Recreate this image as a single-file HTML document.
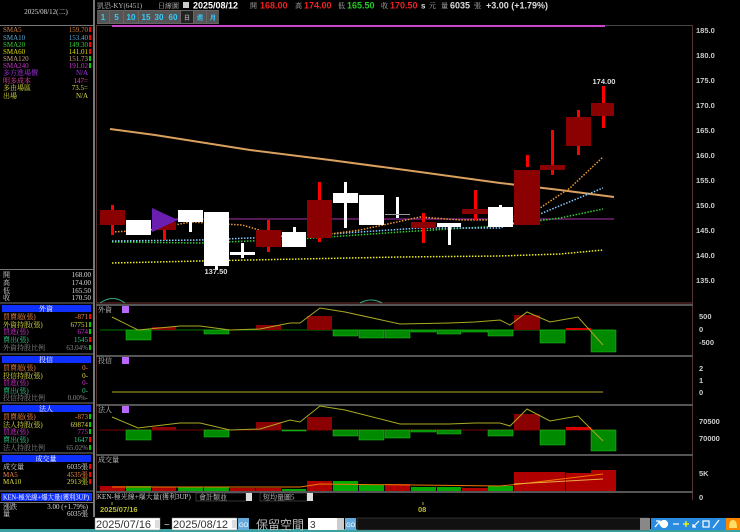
<!DOCTYPE html>
<html><head><meta charset="utf-8"><style>
html,body{margin:0;padding:0;background:#000;width:740px;height:532px;overflow:hidden}
svg{display:block}
text{font-family:"Liberation Sans","Noto Sans CJK TC",sans-serif}
.s{font-family:"Liberation Serif","Noto Serif CJK SC",serif;font-size:7px}
</style></head><body>
<svg width="740" height="532" viewBox="0 0 740 532">
<defs><clipPath id="lc"><rect x="0" y="0" width="93" height="532"/></clipPath></defs>
<rect width="740" height="532" fill="#000"/>
<line x1="94" y1="0" x2="94" y2="517" stroke="#777" stroke-width="2"/>
<g clip-path="url(#lc)">
<line x1="0" y1="25.5" x2="93" y2="25.5" stroke="#777"/>
<text x="46" y="14" class="s" fill="#ddd" text-anchor="middle" font-size="8">2025/08/12(二)</text>
<text x="3" y="32" fill="#d08040" class="s">SMA5</text><text x="88" y="32" fill="#d08040" class="s" text-anchor="end">159.70</text>
<text x="3" y="40" fill="#5aa8d8" class="s">SMA10</text><text x="88" y="40" fill="#5aa8d8" class="s" text-anchor="end">153.40</text>
<text x="3" y="47" fill="#3c3" class="s">SMA20</text><text x="88" y="47" fill="#3c3" class="s" text-anchor="end">149.30</text>
<text x="3" y="54" fill="#dd0" class="s">SMA60</text><text x="88" y="54" fill="#dd0" class="s" text-anchor="end">141.01</text>
<text x="3" y="61" fill="#c9a080" class="s">SMA120</text><text x="88" y="61" fill="#c9a080" class="s" text-anchor="end">151.73</text>
<text x="3" y="68" fill="#c3c" class="s">SMA240</text><text x="88" y="68" fill="#c3c" class="s" text-anchor="end">191.02</text>
<text x="3" y="75" fill="#a3e" class="s">多方進場價</text><text x="88" y="75" fill="#a3e" class="s" text-anchor="end">N/A</text>
<text x="3" y="83" fill="#e4a" class="s">明多成本</text><text x="88" y="83" fill="#e4a" class="s" text-anchor="end">147=</text>
<text x="3" y="90" fill="#dd4" class="s">多由場區</text><text x="88" y="90" fill="#dd4" class="s" text-anchor="end">73.5=</text>
<text x="3" y="98" fill="#dd4" class="s">出場</text><text x="88" y="98" fill="#dd4" class="s" text-anchor="end">N/A</text>
<g fill="#f00"><rect x="89" y="27" width="2" height="5"/><rect x="89" y="35" width="2" height="5"/><rect x="89" y="42" width="2" height="5"/><rect x="89" y="49" width="2" height="5"/></g>
<g fill="#0c0"><rect x="89" y="56" width="2" height="5"/><rect x="89" y="63" width="2" height="5"/></g>
<line x1="0" y1="269.5" x2="93" y2="269.5" stroke="#777"/>
<text x="3" y="277" class="s" fill="#ddd">開</text><text x="91" y="277" class="s" fill="#ddd" text-anchor="end">168.00</text>
<text x="3" y="285" class="s" fill="#ddd">高</text><text x="91" y="285" class="s" fill="#ddd" text-anchor="end">174.00</text>
<text x="3" y="293" class="s" fill="#ddd">低</text><text x="91" y="293" class="s" fill="#ddd" text-anchor="end">165.50</text>
<text x="3" y="300" class="s" fill="#ddd">收</text><text x="91" y="300" class="s" fill="#ddd" text-anchor="end">170.50</text>
<line x1="0" y1="303" x2="93" y2="303" stroke="#777"/>
<rect x="2" y="305" width="89" height="7" fill="#1030ff"/><text x="46" y="311" class="s" fill="#fff" text-anchor="middle">外資</text>
<text x="3" y="319" class="s" fill="#e84">買賣超(張)</text><text x="88" y="319" class="s" fill="#e84" text-anchor="end">-871</text>
<text x="3" y="327" class="s" fill="#dd4">外資持股(張)</text><text x="88" y="327" class="s" fill="#dd4" text-anchor="end">67751</text>
<text x="3" y="334" class="s" fill="#c3c">買進(張)</text><text x="88" y="334" class="s" fill="#c3c" text-anchor="end">674</text>
<text x="3" y="342" class="s" fill="#3c8">賣出(張)</text><text x="88" y="342" class="s" fill="#3c8" text-anchor="end">1545</text>
<text x="3" y="350" class="s" fill="#888">外資持股比例</text><text x="88" y="350" class="s" fill="#888" text-anchor="end">63.04%</text>
<line x1="0" y1="354" x2="93" y2="354" stroke="#777"/>
<rect x="2" y="356" width="89" height="7" fill="#1030ff"/><text x="46" y="362" class="s" fill="#fff" text-anchor="middle">投信</text>
<text x="3" y="370" class="s" fill="#e84">買賣超(張)</text><text x="88" y="370" class="s" fill="#e84" text-anchor="end">0-</text>
<text x="3" y="378" class="s" fill="#dd4">投信持股(張)</text><text x="88" y="378" class="s" fill="#dd4" text-anchor="end">0-</text>
<text x="3" y="385" class="s" fill="#c3c">買進(張)</text><text x="88" y="385" class="s" fill="#c3c" text-anchor="end">0-</text>
<text x="3" y="393" class="s" fill="#3c8">賣出(張)</text><text x="88" y="393" class="s" fill="#3c8" text-anchor="end">0-</text>
<text x="3" y="400" class="s" fill="#888">投信持股比例</text><text x="88" y="400" class="s" fill="#888" text-anchor="end">0.00%-</text>
<line x1="0" y1="403" x2="93" y2="403" stroke="#777"/>
<rect x="2" y="405" width="89" height="7" fill="#1030ff"/><text x="46" y="411" class="s" fill="#fff" text-anchor="middle">法人</text>
<text x="3" y="419" class="s" fill="#e84">買賣超(張)</text><text x="88" y="419" class="s" fill="#e84" text-anchor="end">-873</text>
<text x="3" y="427" class="s" fill="#dd4">法人持股(張)</text><text x="88" y="427" class="s" fill="#dd4" text-anchor="end">69874</text>
<text x="3" y="434" class="s" fill="#c3c">買進(張)</text><text x="88" y="434" class="s" fill="#c3c" text-anchor="end">775</text>
<text x="3" y="442" class="s" fill="#3c8">賣出(張)</text><text x="88" y="442" class="s" fill="#3c8" text-anchor="end">1647</text>
<text x="3" y="450" class="s" fill="#888">法人持股比例</text><text x="88" y="450" class="s" fill="#888" text-anchor="end">65.02%</text>
<line x1="0" y1="453" x2="93" y2="453" stroke="#777"/>
<rect x="2" y="455" width="89" height="7" fill="#1030ff"/><text x="46" y="461" class="s" fill="#fff" text-anchor="middle">成交量</text>
<text x="3" y="469" class="s" fill="#ddd">成交量</text><text x="88" y="469" class="s" fill="#ddd" text-anchor="end">6035張</text>
<text x="3" y="477" class="s" fill="#e84">MA5</text><text x="88" y="477" class="s" fill="#e84" text-anchor="end">4535張</text>
<text x="3" y="484" class="s" fill="#dd4">MA10</text><text x="88" y="484" class="s" fill="#dd4" text-anchor="end">2913張</text>
<line x1="0" y1="491" x2="93" y2="491" stroke="#777"/>
<rect x="1" y="493" width="91" height="8" fill="#1030ff"/><text x="3" y="499.5" class="s" fill="#fff" font-size="6" textLength="86" lengthAdjust="spacingAndGlyphs">KEN-極光線+爆大量(獲利3UP)</text>
<text x="3" y="509" class="s" fill="#ddd">漲跌</text><text x="88" y="509" class="s" fill="#ddd" text-anchor="end">3.00 (+1.79%)</text>
<text x="3" y="516" class="s" fill="#ddd">量</text><text x="88" y="516" class="s" fill="#ddd" text-anchor="end">6035張</text>
<g fill="#f00"><rect x="89" y="314" width="2" height="5"/><rect x="89" y="337" width="2" height="5"/><rect x="89" y="437" width="2" height="5"/><rect x="89" y="464" width="2" height="5"/><rect x="89" y="472" width="2" height="5"/><rect x="89" y="479" width="2" height="5"/></g>
<g fill="#0c0"><rect x="89" y="322" width="2" height="5"/><rect x="89" y="329" width="2" height="5"/><rect x="89" y="345" width="2" height="5"/><rect x="89" y="414" width="2" height="5"/><rect x="89" y="422" width="2" height="5"/><rect x="89" y="429" width="2" height="5"/><rect x="89" y="445" width="2" height="5"/></g>
<line x1="0" y1="502.5" x2="93" y2="502.5" stroke="#777"/>
</g>

<text x="97" y="8" class="s" fill="#bbb">凱恐-KY(6451)</text>
<text x="158" y="8" class="s" fill="#bbb">日線圖</text>
<rect x="183" y="2" width="6" height="6" fill="#ccc"/>
<text x="193" y="8.5" font-size="9" font-weight="bold" fill="#fff">2025/08/12</text>
<text x="250" y="8" class="s" fill="#bbb">開</text><text x="260" y="8.5" font-size="9" font-weight="bold" fill="#e22">168.00</text>
<text x="295" y="8" class="s" fill="#bbb">高</text><text x="304" y="8.5" font-size="9" font-weight="bold" fill="#e22">174.00</text>
<text x="338" y="8" class="s" fill="#bbb">低</text><text x="347" y="8.5" font-size="9" font-weight="bold" fill="#2c2">165.50</text>
<text x="381" y="8" class="s" fill="#bbb">收</text><text x="390" y="8.5" font-size="9" font-weight="bold" fill="#e22">170.50</text>
<text x="421" y="8.5" font-size="8" font-weight="bold" fill="#ddd">s</text><text x="429" y="8" class="s" fill="#bbb">元</text>
<text x="441" y="8" class="s" fill="#bbb">量</text><text x="450" y="8.5" font-size="9" font-weight="bold" fill="#ddd">6035</text>
<text x="474" y="8" class="s" fill="#bbb">張</text>
<text x="486" y="8.5" font-size="9" font-weight="bold" fill="#ddd">+3.00 (+1.79%)</text>
<rect x="97" y="10" width="122" height="14" fill="#666"/>
<g font-size="8" font-weight="bold" fill="#3cf" text-anchor="middle">
<rect x="97" y="11" width="12" height="12" fill="#555"/><text x="103" y="20">1</text>
<rect x="110" y="11" width="13" height="12" fill="#555"/><text x="116.5" y="20">5</text>
<rect x="124" y="11" width="14" height="12" fill="#555"/><text x="131" y="20">10</text>
<rect x="139" y="11" width="14" height="12" fill="#555"/><text x="146" y="20">15</text>
<rect x="152" y="11" width="14" height="12" fill="#555"/><text x="159" y="20">30</text>
<rect x="166" y="11" width="14" height="12" fill="#555"/><text x="173" y="20">60</text>
<rect x="181" y="11" width="12" height="12" fill="#222"/><text x="187" y="20" font-size="6" fill="#999">日</text>
<rect x="194" y="11" width="12" height="12" fill="#555"/><text x="200" y="20" font-size="6">週</text>
<rect x="207" y="11" width="12" height="12" fill="#555"/><text x="213" y="20" font-size="6">月</text>
</g>
<line x1="96" y1="25.5" x2="692" y2="25.5" stroke="#444"/>
<line x1="692.5" y1="25" x2="692.5" y2="500" stroke="#533"/>
<line x1="96.5" y1="25" x2="96.5" y2="500" stroke="#533"/>
<line x1="112" y1="26" x2="605" y2="26" stroke="#c4c" stroke-width="2"/>
<g font-size="7.5" font-weight="bold" fill="#ccc">
<text x="696" y="33">185.0</text><text x="696" y="58">180.0</text><text x="696" y="83">175.0</text><text x="696" y="108">170.0</text><text x="696" y="133">165.0</text><text x="696" y="158">160.0</text><text x="696" y="183">155.0</text><text x="696" y="208">150.0</text><text x="696" y="233">145.0</text><text x="696" y="258">140.0</text><text x="696" y="283">135.0</text>
</g>
<polyline points="110,129 155,135 250,150 330,160 420,172 500,183 560,190 614,197" fill="none" stroke="#d9a060" stroke-width="2"/>
<line x1="170" y1="219" x2="614" y2="219" stroke="#a3a" stroke-width="1"/>
<g fill="none" stroke-width="1.5" stroke-dasharray="1.5,1.5">
<polyline points="112,263 200,261 300,259 400,257 500,256 560,254 603,250" stroke="#ee2"/>
<polyline points="112,242 200,243 300,239 400,232 500,226 560,218 603,209" stroke="#3c3"/>
<polyline points="112,241 200,240 300,236 360,232 420,228 500,228 540,214 603,188" stroke="#8cf"/>
<polyline points="112,232 150,230 190,222 242,225 280,236 300,238 360,230 420,217 460,220 500,220 540,208 570,188 603,157" stroke="#e93"/>
</g>
<g fill="#8b0000">
<rect x="111" y="205" width="3" height="30" fill="#f00"/><rect x="100" y="210" width="25" height="15"/>
<rect x="163" y="222" width="3" height="18" fill="#f00"/><rect x="152" y="222" width="24" height="8"/>
<rect x="267" y="220" width="3" height="32" fill="#f00"/><rect x="256" y="230" width="25" height="17"/>
<rect x="318" y="182" width="3" height="60" fill="#f00"/><rect x="307" y="200" width="25" height="38"/>
<rect x="422" y="213" width="3" height="30" fill="#f00"/><rect x="411" y="222" width="25" height="6"/>
<rect x="474" y="190" width="3" height="30" fill="#f00"/><rect x="462" y="209" width="26" height="5"/>
<rect x="526" y="155" width="3" height="12" fill="#f00"/><rect x="514" y="170" width="26" height="55"/>
<rect x="551" y="130" width="3" height="45" fill="#f00"/><rect x="540" y="165" width="25" height="5"/>
<rect x="577" y="110" width="3" height="45" fill="#f00"/><rect x="566" y="117" width="25" height="29"/>
<rect x="602" y="86" width="3" height="42" fill="#f00"/><rect x="591" y="103" width="23" height="13"/>
</g>
<polygon points="152,208 178,220 152,232" fill="#6a1fb0"/>
<g fill="#fff">
<rect x="126" y="220" width="25" height="15"/>
<rect x="189" y="215" width="3" height="17"/><rect x="178" y="210" width="25" height="12"/>
<rect x="215" y="212" width="3" height="58"/><rect x="204" y="212" width="25" height="54"/>
<rect x="241" y="243" width="3" height="15"/><rect x="230" y="252" width="25" height="3"/>
<rect x="293" y="227" width="3" height="10"/><rect x="282" y="232" width="24" height="15"/>
<rect x="344" y="182" width="3" height="46"/><rect x="333" y="193" width="25" height="10"/>
<rect x="359" y="195" width="25" height="30"/>
<rect x="396" y="197" width="3" height="21"/><rect x="385" y="214" width="25" height="1" fill="#999"/>
<rect x="448" y="223" width="3" height="22"/><rect x="437" y="223" width="24" height="4"/>
<rect x="499" y="205" width="3" height="4"/><rect x="488" y="207" width="25" height="20"/>
</g>
<text x="216" y="274" font-size="7.5" font-weight="bold" fill="#ddd" text-anchor="middle">137.50</text>
<text x="604" y="84" font-size="7.5" font-weight="bold" fill="#ddd" text-anchor="middle">174.00</text>
<line x1="97" y1="303" x2="692" y2="303" stroke="#733"/>
<path d="M100,303 Q113,294 125,303 M360,303 Q371,297 382,303" stroke="#3a8" fill="none"/>
<g fill="#555"><rect x="96" y="304" width="597" height="2"/><rect x="96" y="355" width="597" height="2"/><rect x="96" y="404" width="597" height="2"/><rect x="96" y="454" width="597" height="2"/><rect x="96" y="491" width="597" height="2"/></g>
<text x="98" y="312" class="s" fill="#ccc">外資</text><rect x="122" y="306" width="7" height="7" fill="#b6f"/>
<line x1="100" y1="330" x2="614" y2="330" stroke="#070"/>
<g fill="#008a00" stroke="#2c2" stroke-width=".5">
<rect x="126" y="330" width="25" height="10"/><rect x="204" y="330" width="25" height="4"/><rect x="333" y="330" width="25" height="6"/><rect x="359" y="330" width="25" height="8"/><rect x="385" y="330" width="25" height="8"/><rect x="411" y="330" width="25" height="2"/><rect x="437" y="330" width="24" height="4"/><rect x="462" y="330" width="26" height="2"/><rect x="488" y="330" width="25" height="6"/><rect x="540" y="330" width="25" height="13"/><rect x="591" y="330" width="25" height="22"/>
</g>
<g fill="#8b0000"><rect x="152" y="327" width="24" height="3"/><rect x="256" y="325" width="25" height="5"/><rect x="307" y="316" width="25" height="14"/><rect x="514" y="315" width="26" height="15"/><rect x="566" y="328" width="25" height="2" fill="#d00"/></g>
<polyline points="112,317 138,330 180,326 200,326 230,330 260,329 290,323 300,323 320,308 345,312 400,324 449,323 475,322 500,320 510,325 527,312 550,322 578,317 603,345" fill="none" stroke="#aa2"/>
<g font-size="7.5" font-weight="bold" fill="#ccc"><text x="699" y="319">500</text><text x="699" y="332">0</text><text x="699" y="345">-500</text></g>
<text x="98" y="363" class="s" fill="#ccc">投信</text><rect x="122" y="357" width="7" height="7" fill="#b6f"/>
<line x1="112" y1="392" x2="603" y2="392" stroke="#aa2"/>
<g font-size="7.5" font-weight="bold" fill="#ccc"><text x="699" y="371">2</text><text x="699" y="383">1</text><text x="699" y="395">0</text></g>
<text x="98" y="412" class="s" fill="#ccc">法人</text><rect x="122" y="406" width="7" height="7" fill="#b6f"/>
<line x1="100" y1="430" x2="614" y2="430" stroke="#700"/>
<g fill="#008a00" stroke="#2c2" stroke-width=".5">
<rect x="126" y="430" width="25" height="10"/><rect x="204" y="430" width="25" height="7"/><rect x="282" y="430" width="24" height="1"/><rect x="333" y="430" width="25" height="6"/><rect x="359" y="430" width="25" height="10"/><rect x="385" y="430" width="25" height="8"/><rect x="411" y="430" width="25" height="2"/><rect x="437" y="430" width="24" height="4"/><rect x="488" y="430" width="25" height="6"/><rect x="540" y="430" width="25" height="15"/><rect x="591" y="430" width="25" height="21"/>
</g>
<g fill="#8b0000"><rect x="152" y="427" width="24" height="3"/><rect x="256" y="422" width="25" height="8"/><rect x="307" y="417" width="25" height="13"/><rect x="514" y="414" width="26" height="16"/><rect x="566" y="427" width="25" height="3" fill="#d00"/></g>
<polyline points="112,417 138,428 180,423 200,423 230,430 260,429 290,420 300,422 320,406 345,410 400,424 449,424 475,423 500,423 510,426 527,409 550,421 578,416 603,441" fill="none" stroke="#aa2"/>
<g font-size="7.5" font-weight="bold" fill="#ccc"><text x="699" y="424">70500</text><text x="699" y="441">70000</text></g>
<text x="98" y="462" class="s" fill="#ccc">成交量</text>
<g fill="#b00000"><rect x="100" y="486" width="25" height="5"/><rect x="152" y="487" width="24" height="4"/><rect x="230" y="488" width="25" height="3"/><rect x="256" y="488" width="25" height="3"/><rect x="307" y="481" width="25" height="10"/><rect x="385" y="484" width="25" height="7"/><rect x="462" y="488" width="26" height="3"/><rect x="514" y="472" width="26" height="19"/><rect x="540" y="472" width="25" height="19"/><rect x="566" y="473" width="25" height="18"/><rect x="591" y="470" width="25" height="21"/></g>
<g fill="#0a0"><rect x="126" y="486" width="25" height="5"/><rect x="178" y="487" width="25" height="4"/><rect x="204" y="487" width="25" height="4"/><rect x="282" y="489" width="24" height="2"/><rect x="333" y="481" width="25" height="10"/><rect x="359" y="485" width="25" height="6"/><rect x="411" y="487" width="25" height="4"/><rect x="437" y="487" width="24" height="4"/><rect x="488" y="486" width="25" height="5"/></g>
<polyline points="112,487 300,487 320,484 500,486 520,484 603,474" fill="none" stroke="#e70" stroke-width="1"/>
<polyline points="514,484 603,479" fill="none" stroke="#ea4" stroke-width="1"/>
<g font-size="7.5" font-weight="bold" fill="#ccc"><text x="699" y="476">5K</text><text x="699" y="500">0</text></g>
<text x="97" y="499" class="s" fill="#ccc">KEN-極光線+爆大量(獲利3UP)</text>
<rect x="196" y="493" width="50" height="8" fill="#000" stroke="#666" stroke-width=".5"/><text x="199" y="499.5" class="s" fill="#ccc">會計類並</text>
<rect x="246" y="493" width="6" height="8" fill="#ddd"/>
<rect x="260" y="493" width="47" height="8" fill="#000" stroke="#666" stroke-width=".5"/><text x="263" y="499.5" class="s" fill="#ccc">短均量圖5</text>
<rect x="307" y="493" width="6" height="8" fill="#ddd"/>
<line x1="112" y1="502" x2="112" y2="505" stroke="#aa2"/><line x1="423" y1="502" x2="423" y2="505" stroke="#aa2"/>
<text x="100" y="512" font-size="7.5" font-weight="bold" fill="#bb3">2025/07/16</text>
<text x="418" y="512" font-size="7.5" font-weight="bold" fill="#bb3">08</text>
<rect x="94" y="517" width="646" height="15" fill="#000"/>
<rect x="0" y="529" width="740" height="3" fill="#3aa0a0"/>
<rect x="95" y="518" width="65" height="12" fill="#fff" stroke="#888" stroke-width=".5"/><text x="96" y="528" font-family="Liberation Serif" font-size="11" fill="#333">2025/07/16</text>
<rect x="155" y="520" width="5" height="8" fill="#ddd"/>
<text x="164" y="528" font-size="10" fill="#ccc">~</text>
<rect x="172" y="518" width="65" height="12" fill="#fff" stroke="#888" stroke-width=".5"/><text x="173" y="528" font-family="Liberation Serif" font-size="11" fill="#333">2025/08/12</text>
<rect x="232" y="520" width="5" height="8" fill="#ddd"/>
<rect x="238" y="518" width="11" height="12" fill="#6ad"/><text x="239" y="527" font-size="6" fill="#fff">GO</text>
<text x="256" y="529" font-family="Noto Serif CJK SC" font-size="12" fill="#bbb">保留空間</text>
<rect x="308" y="518" width="30" height="12" fill="#fff"/><text x="310" y="528" font-size="10" fill="#333">3</text>
<rect x="337" y="518" width="7" height="12" fill="#ccc"/>
<rect x="345" y="518" width="11" height="12" fill="#6ad"/><text x="346" y="527" font-size="6" fill="#fff">GO</text>
<rect x="357" y="518" width="292" height="12" fill="#111" stroke="#555" stroke-width=".5"/>
<rect x="640" y="518" width="10" height="12" fill="#888"/>
<rect x="651" y="518" width="89" height="12" fill="#2a8ce0"/>
<g stroke="#fff" stroke-width="1.2" fill="none">
<path d="M655,527 L660,521 M656,521 L660,521 L660,525"/>
<circle cx="664" cy="524" r="3.5" fill="#fff"/>
<line x1="673" y1="524" x2="679" y2="524"/>
<path d="M686,521 V527 M683,524 H689" stroke="#ff0"/>
<path d="M693,527 L699,521 M693,524 V527 H696"/>
<rect x="703" y="521" width="6" height="6"/>
<path d="M713,528 L719,520"/>
</g>
<rect x="726" y="518" width="14" height="12" fill="#f80"/><path d="M729,528 Q729,520 733,520 Q737,520 737,528 Z" fill="#fd6"/>
</svg>
</body></html>
